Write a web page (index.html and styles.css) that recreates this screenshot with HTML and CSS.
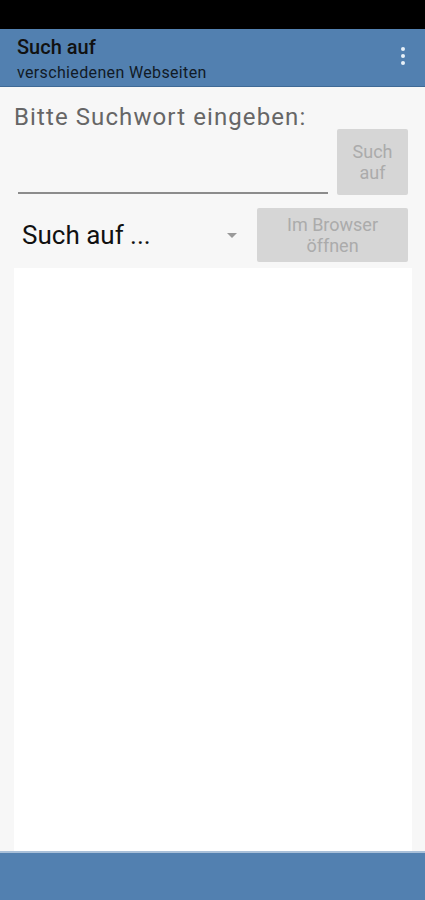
FILE: index.html
```html
<!DOCTYPE html>
<html lang="de">
<head>
  <meta charset="UTF-8">
  <title>Such auf</title>
  <link rel="stylesheet" href="styles.css">
</head>
<body>
  <div class="statusbar"></div>

  <header class="appbar">
    <div class="titel">
      <div class="titel-haupt">Such auf</div>
      <div class="titel-unter">verschiedenen Webseiten</div>
    </div>
    <div class="menu">
      <span></span><span></span><span></span>
    </div>
  </header>

  <main class="inhalt">
    <div class="label">Bitte Suchwort eingeben:</div>

    <div class="suchzeile">
      <div class="eingabe"></div>
      <button class="knopf knopf-such" type="button">Such<br>auf</button>
    </div>

    <div class="auswahlzeile">
      <div class="auswahl">
        <span>Such auf ...</span>
        <span class="pfeil"></span>
      </div>
      <button class="knopf knopf-browser" type="button">Im Browser<br>öffnen</button>
    </div>

    <div class="webview"></div>
  </main>

  <footer class="bottombar"></footer>
</body>
</html>
```

FILE: styles.css
```css
* {
  box-sizing: border-box;
}

body {
  margin: 0;
  width: 425px;
  height: 900px;
  display: flex;
  flex-direction: column;
  background-color: #f7f7f7;
  font-family: 'Roboto', 'Liberation Sans', sans-serif;
  overflow: hidden;
}

.statusbar {
  height: 29px;
  background-color: #000000;
}

.appbar {
  height: 58px;
  background-color: #5280b0;
  display: flex;
  align-items: center;
  justify-content: space-between;
  padding: 0 20px 0 17px;
  border-bottom: 1px solid #3f6a96;
}

.titel-haupt {
  font-size: 20px;
  font-weight: 500;
  color: #111111;
  line-height: 24px;
  margin-top: 4px;
}

.titel-unter {
  font-size: 16px;
  letter-spacing: 0.35px;
  color: #111a26;
  line-height: 24px;
  margin-top: 2px;
}

.menu {
  display: flex;
  flex-direction: column;
  gap: 3px;
  margin-top: -4px;
}

.menu span {
  width: 4px;
  height: 4px;
  border-radius: 50%;
  background-color: #e8f0f8;
}

.inhalt {
  flex: 1;
  display: flex;
  flex-direction: column;
  padding: 0 13px 0 14px;
}

.label {
  font-size: 24px;
  letter-spacing: 1.1px;
  color: #666666;
  margin-top: 16px;
  line-height: 28px;
}

.suchzeile {
  display: flex;
  align-items: flex-start;
  justify-content: space-between;
  margin-top: -2px;
}

.eingabe {
  width: 310px;
  height: 65px;
  margin-left: 4px;
  border-bottom: 2px solid #8c8c8c;
}

.knopf {
  border: none;
  border-radius: 2px;
  background-color: #d6d6d6;
  color: #ababab;
  font-family: 'Roboto', 'Liberation Sans', sans-serif;
  font-size: 18px;
  line-height: 21px;
  padding: 0;
  text-align: center;
}

.knopf-such {
  width: 71px;
  height: 66px;
  margin-right: 4px;
}

.auswahlzeile {
  display: flex;
  align-items: center;
  justify-content: space-between;
  margin-top: 13px;
}

.auswahl {
  width: 225px;
  display: flex;
  align-items: center;
  justify-content: space-between;
  padding-left: 8px;
  font-size: 26px;
  color: #111111;
}

.pfeil {
  width: 0;
  height: 0;
  border-left: 5px solid transparent;
  border-right: 5px solid transparent;
  border-top: 5px solid #9a9a9a;
  margin-right: 2px;
}

.knopf-browser {
  width: 151px;
  height: 54px;
  margin-right: 4px;
}

.webview {
  flex: 1;
  background-color: #ffffff;
  margin-top: 6px;
}

.bottombar {
  height: 49px;
  background-color: #5280b0;
  border-top: 2px solid #a9c0d9;
}
```
